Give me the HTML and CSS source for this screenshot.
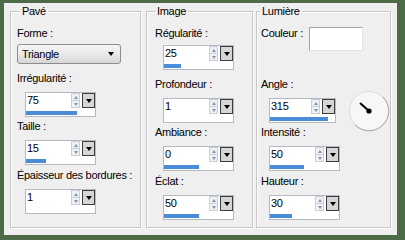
FILE: index.html
```html
<!DOCTYPE html>
<html>
<head>
  <title>Pavé</title>
  <link rel="stylesheet" href="styles.css">
</head>
<body>
  <div class="frame">
    <div class="panel">

      <fieldset class="grp pave">
        <legend>Pavé</legend>
        <div class="body">
          <div class="lbl l1">Forme :</div>
          <div class="combo">Triangle<span class="carr"></span></div>
          <div class="lbl l2">Irrégularité :</div>
          <div class="spin">
            <div class="line"><span class="val">75</span><span class="arrows"><i class="up"></i><i class="dn"></i></span><span class="drop"></span></div>
            <div class="bar" style="width:51px"></div>
          </div>
          <div class="lbl l3">Taille :</div>
          <div class="spin">
            <div class="line"><span class="val">15</span><span class="arrows"><i class="up"></i><i class="dn"></i></span><span class="drop"></span></div>
            <div class="bar" style="width:20px"></div>
          </div>
          <div class="lbl l4">Épaisseur des bordures :</div>
          <div class="spin">
            <div class="line"><span class="val">1</span><span class="arrows"><i class="up"></i><i class="dn"></i></span><span class="drop"></span></div>
            <div class="bar" style="width:0px"></div>
          </div>
        </div>
      </fieldset>

      <fieldset class="grp image">
        <legend>Image</legend>
        <div class="body">
          <div class="lbl l1">Régularité :</div>
          <div class="spin first">
            <div class="line"><span class="val">25</span><span class="arrows"><i class="up"></i><i class="dn"></i></span><span class="drop"></span></div>
            <div class="bar" style="width:17px"></div>
          </div>
          <div class="lbl l2">Profondeur :</div>
          <div class="spin">
            <div class="line"><span class="val">1</span><span class="arrows"><i class="up"></i><i class="dn"></i></span><span class="drop"></span></div>
            <div class="bar" style="width:0px"></div>
          </div>
          <div class="lbl l3">Ambiance :</div>
          <div class="spin">
            <div class="line"><span class="val">0</span><span class="arrows"><i class="up"></i><i class="dn"></i></span><span class="drop"></span></div>
            <div class="bar" style="width:35px"></div>
          </div>
          <div class="lbl l4">Éclat :</div>
          <div class="spin">
            <div class="line"><span class="val">50</span><span class="arrows"><i class="up"></i><i class="dn"></i></span><span class="drop"></span></div>
            <div class="bar" style="width:35px"></div>
          </div>
        </div>
      </fieldset>

      <fieldset class="grp lum">
        <legend>Lumière</legend>
        <div class="body">
          <div class="colrow">
            <div class="lbl cl">Couleur :</div>
            <div class="swatch"></div>
          </div>
          <div class="lbl l2">Angle :</div>
          <div class="anglerow">
            <div class="spin">
              <div class="line"><span class="val">315</span><span class="arrows"><i class="up"></i><i class="dn"></i></span><span class="drop"></span></div>
              <div class="bar" style="width:58px"></div>
            </div>
            <svg class="dial" width="42" height="42" viewBox="0 0 42 42">
              <circle cx="21" cy="21" r="19.5" fill="#f7f7f7" stroke="#dcdcdc" stroke-width="1"/>
              <path d="M35 7 A19.5 19.5 0 0 1 7 35" fill="none" stroke="#a9a9a9" stroke-width="1"/>
              <line x1="21" y1="21" x2="12" y2="13" stroke="#000" stroke-width="2"/>
              <circle cx="21" cy="21" r="2.6" fill="#000"/>
            </svg>
          </div>
          <div class="lbl l3">Intensité :</div>
          <div class="spin">
            <div class="line"><span class="val">50</span><span class="arrows"><i class="up"></i><i class="dn"></i></span><span class="drop"></span></div>
            <div class="bar" style="width:34px"></div>
          </div>
          <div class="lbl l4">Hauteur :</div>
          <div class="spin">
            <div class="line"><span class="val">30</span><span class="arrows"><i class="up"></i><i class="dn"></i></span><span class="drop"></span></div>
            <div class="bar" style="width:22px"></div>
          </div>
        </div>
      </fieldset>

    </div>
  </div>
</body>
</html>
```

FILE: styles.css
```css
body{
  margin:0;
  font-family:"Liberation Sans", Arial, sans-serif;
  font-size:11px;
  letter-spacing:-0.3px;
  color:#000;
}
.frame{
  width:405px;
  height:240px;
  box-sizing:border-box;
  background:#4e6b48;
  padding:3px 8px 5px 4px;
}
.panel{
  height:100%;
  box-sizing:border-box;
  background:#efefef;
  display:flex;
  padding:2px 6px 0 6px;
}

/* group boxes */
.grp{
  margin:0;
  padding:0;
  min-width:0;
  height:223px;
  box-sizing:border-box;
  border:1px solid #c6c6c6;
  box-shadow:inset 1px 1px 0 #fff, 1px 1px 0 #fff;
}
.grp legend{
  padding:0 2px;
  line-height:13px;
  background:#efefef;
}
.pave{ width:131px; }
.pave legend{ margin-left:9px; }
.pave .body{ padding-left:6px; }
.image{ width:107px; margin-left:5px; }
.image legend{ margin-left:8px; }
.image .body{ padding-left:8px; }
.lum{ width:135px; margin-left:3px; }
.lum legend{ margin-left:3px; }
.lum .body{ padding-left:4px; }

.body{
  padding-top:9px;
}
.lbl{
  height:13px;
  line-height:13px;
  white-space:nowrap;
}
.l2{ margin-top:8px; }
.l3{ margin-top:3px; }
.l4{ margin-top:4px; }

/* combobox */
.combo{
  position:relative;
  width:104px;
  height:20px;
  box-sizing:border-box;
  margin:4px 0 1px 0;
  border:1px solid #8c8c8c;
  border-radius:3px;
  background:linear-gradient(#f6f6f6, #e9e9e9 50%, #d6d6d6);
  line-height:18px;
  padding-left:4px;
}
.carr{
  position:absolute;
  right:6px;
  top:7px;
  border-top:4px solid #000;
  border-left:3.5px solid transparent;
  border-right:3.5px solid transparent;
}

/* spin edit with slider bar */
.spin{
  width:71px;
  height:25px;
  box-sizing:border-box;
  margin:7px 0 0 8px;
  border:1px solid #b4bac4;
  background:#fff;
  padding-bottom:1px;
}
.spin.first{ margin-top:5px; }
.line{
  display:flex;
  height:15px;
}
.val{
  flex:1;
  padding-left:1px;
  line-height:15px;
}
.arrows{
  width:9px;
  margin-right:2px;
  display:flex;
  flex-direction:column;
  box-sizing:border-box;
  border:1px solid #c9cfd9;
  background:#eef1f6;
}
.arrows i{
  flex:1;
  display:flex;
  align-items:center;
  justify-content:center;
}
.arrows i.up{ border-bottom:1px solid #c9cfd9; }
.arrows i::after{
  content:"";
  border-left:2.5px solid transparent;
  border-right:2.5px solid transparent;
}
.arrows i.up::after{ border-bottom:3px solid #8a93a3; }
.arrows i.dn::after{ border-top:3px solid #8a93a3; }
.drop{
  width:13px;
  height:15px;
  box-sizing:border-box;
  border:1px solid #3c3c3c;
  background:#d6d6d6;
  display:flex;
  align-items:center;
  justify-content:center;
}
.drop::after{
  content:"";
  border-top:4px solid #000;
  border-left:3.5px solid transparent;
  border-right:3.5px solid transparent;
}
.bar{
  height:4px;
  margin-top:3px;
  background:#4a8cd8;
}

/* lumière column */
.colrow{
  display:flex;
  height:43px;
}
.cl{
  width:48px;
  margin-top:0;
}
.swatch{
  width:54px;
  height:24px;
  box-sizing:border-box;
  background:#fff;
  border:1px solid;
  border-color:#a0a0a0 #e4e4e4 #e4e4e4 #a0a0a0;
}
.anglerow{
  display:flex;
  align-items:center;
  height:25px;
  margin-top:7px;
}
.anglerow .spin{
  margin-top:0;
}
.dial{
  flex:none;
  margin-left:12px;
}
```
